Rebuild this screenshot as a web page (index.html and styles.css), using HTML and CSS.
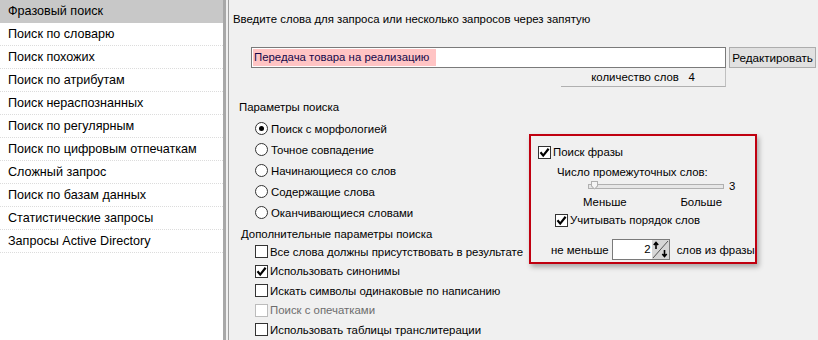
FILE: index.html
```html
<!DOCTYPE html>
<html lang="ru">
<head>
  <meta charset="UTF-8">
  <title>Фразовый поиск</title>
  <link rel="stylesheet" href="styles.css">
</head>
<body>
  <div class="sidebar">
    <div class="nav-item selected">Фразовый поиск</div>
    <div class="nav-item">Поиск по словарю</div>
    <div class="nav-item">Поиск похожих</div>
    <div class="nav-item">Поиск по атрибутам</div>
    <div class="nav-item">Поиск нераспознанных</div>
    <div class="nav-item">Поиск по регулярным</div>
    <div class="nav-item">Поиск по цифровым отпечаткам</div>
    <div class="nav-item">Сложный запрос</div>
    <div class="nav-item">Поиск по базам данных</div>
    <div class="nav-item">Статистические запросы</div>
    <div class="nav-item">Запросы Active Directory</div>
  </div>

  <div class="splitter"></div>

  <div class="main">
    <div class="prompt">Введите слова для запроса или несколько запросов через запятую</div>

    <div class="query">
      <div class="query-input"><span class="mark">Передача товара на реализацию</span></div>
      <button class="edit-btn">Редактировать</button>
    </div>
    <div class="word-count">количество слов&nbsp;&nbsp;&nbsp;4</div>

    <div class="lower">
      <div class="params">
        <div class="group-title">Параметры поиска</div>
        <div class="radio-list">
          <div class="option"><span class="radio checked"></span>Поиск с морфологией</div>
          <div class="option"><span class="radio"></span>Точное совпадение</div>
          <div class="option"><span class="radio"></span>Начинающиеся со слов</div>
          <div class="option"><span class="radio"></span>Содержащие слова</div>
          <div class="option"><span class="radio"></span>Оканчивающиеся словами</div>
        </div>

        <div class="group-title extra">Дополнительные параметры поиска</div>
        <div class="check-list">
          <div class="option"><span class="check"></span>Все слова должны присутствовать в результате</div>
          <div class="option"><span class="check checked"><svg width="11" height="11" viewBox="0 0 11 11"><path d="M1.5 5.3 L4.2 8.6 L9.6 1.8" fill="none" stroke="#000" stroke-width="2.2"/></svg></span>Использовать синонимы</div>
          <div class="option"><span class="check"></span>Искать символы одинаковые по написанию</div>
          <div class="option disabled"><span class="check"></span>Поиск с опечатками</div>
          <div class="option"><span class="check"></span>Использовать таблицы транслитерации</div>
        </div>
      </div>

      <div class="phrase-box">
        <div class="option phrase-check"><span class="check checked"><svg width="11" height="11" viewBox="0 0 11 11"><path d="M1.5 5.3 L4.2 8.6 L9.6 1.8" fill="none" stroke="#000" stroke-width="2.2"/></svg></span>Поиск фразы</div>
        <div class="gap-title">Число промежуточных слов:</div>
        <div class="slider-row">
          <div class="track"><span class="thumb"></span></div>
          <span class="slider-value">3</span>
        </div>
        <div class="slider-labels"><span>Меньше</span><span>Больше</span></div>
        <div class="option order-check"><span class="check checked"><svg width="11" height="11" viewBox="0 0 11 11"><path d="M1.5 5.3 L4.2 8.6 L9.6 1.8" fill="none" stroke="#000" stroke-width="2.2"/></svg></span>Учитывать порядок слов</div>
        <div class="min-row">
          <span>не меньше</span>
          <div class="spinner">
            <span class="spin-value">2</span>
            <span class="spin-btn"><svg width="17" height="19" viewBox="0 0 17 19"><line x1="1" y1="18" x2="16" y2="1" stroke="#555" stroke-width="1"/><path d="M4 9 V3 M1.8 5 L4 2.5 L6.2 5" fill="none" stroke="#000" stroke-width="1.6"/><path d="M12.5 10 V16 M10.3 14 L12.5 16.5 L14.7 14" fill="none" stroke="#000" stroke-width="1.6"/></svg></span>
          </div>
          <span>слов из фразы</span>
        </div>
      </div>
    </div>
  </div>
</body>
</html>
```

FILE: styles.css
```css
body {
  margin: 0;
  width: 818px;
  height: 340px;
  overflow: hidden;
  display: flex;
  background-color: #f0f0f0;
  font-family: "Liberation Sans", Arial, sans-serif;
  font-size: 11.4px;
  color: #000;
}

.sidebar {
  width: 223px;
  height: 340px;
  background-color: #fff;
  flex-shrink: 0;
}

.nav-item {
  height: 22px;
  line-height: 22px;
  padding-left: 8px;
  font-size: 12.6px;
  white-space: nowrap;
  border-bottom: 1px dotted #dcdcdc;
}

.nav-item.selected {
  background-color: #c8c8c8;
  border-bottom-color: #c8c8c8;
}

.splitter {
  width: 2px;
  flex-shrink: 0;
  border-left: 3px solid #a8a8a8;
  border-right: 1px solid #a0a0a0;
  background-color: #f0f0f0;
}

.main {
  flex: 1;
  white-space: nowrap;
}

.prompt {
  margin: 11px 0 0 4px;
  line-height: 16px;
}

.query {
  display: flex;
  gap: 3px;
  margin: 20px 0 0 22px;
}

.query-input {
  box-sizing: border-box;
  width: 475px;
  height: 21px;
  padding: 1px;
  border: 1px solid #7a7a7a;
  background-color: #fff;
}

.mark {
  display: inline-block;
  height: 17px;
  line-height: 17px;
  width: 182px;
  padding-left: 1px;
  background-color: #ffc4c4;
  color: #14084a;
}

.edit-btn {
  box-sizing: border-box;
  width: 87px;
  height: 21px;
  padding: 0;
  font-family: inherit;
  font-size: 11.7px;
  background-color: #e1e1e1;
  border: 1px solid #adadad;
  color: #000;
}

.word-count {
  box-sizing: border-box;
  width: 165px;
  height: 19px;
  margin-left: 332px;
  line-height: 18px;
  text-align: center;
  border-right: 1px solid #c0c0c0;
  border-bottom: 1px solid #b0b0b0;
}

.lower {
  display: flex;
  margin-top: 12px;
}

.params {
  box-sizing: border-box;
  width: 300px;
  flex-shrink: 0;
  padding-left: 10px;
}

.group-title {
  line-height: 16px;
}

.group-title.extra {
  margin-top: 3px;
  padding-left: 2px;
}

.radio-list {
  margin-top: 3px;
}

.radio-list .option {
  height: 21px;
}

.check-list .option {
  height: 19.5px;
}

.option {
  display: flex;
  align-items: center;
  padding-left: 16px;
}

.radio {
  box-sizing: border-box;
  flex-shrink: 0;
  width: 13px;
  height: 13px;
  margin-right: 3px;
  border: 1px solid #333;
  border-radius: 50%;
  background-color: #fff;
  display: flex;
  align-items: center;
  justify-content: center;
}

.radio.checked::after {
  content: "";
  width: 5px;
  height: 5px;
  border-radius: 50%;
  background-color: #000;
}

.check {
  box-sizing: border-box;
  flex-shrink: 0;
  width: 13px;
  height: 13px;
  margin-right: 2px;
  border: 1px solid #333;
  background-color: #fff;
  display: flex;
  align-items: center;
  justify-content: center;
}

.disabled {
  color: #6d6d6d;
}

.disabled .check {
  border-color: #bcbcbc;
}

.phrase-box {
  box-sizing: border-box;
  flex-shrink: 0;
  width: 228px;
  height: 130px;
  margin-top: 35px;
  padding-top: 6px;
  border: 2px solid #c00010;
  box-shadow: 2px 3px 5px rgba(0, 0, 0, 0.3);
}

.phrase-check {
  height: 20px;
  padding-left: 7px;
}

.gap-title {
  margin-top: 2px;
  padding-left: 26px;
  line-height: 16px;
}

.slider-row {
  display: flex;
  align-items: center;
  height: 12px;
  padding-left: 57px;
}

.track {
  position: relative;
  box-sizing: border-box;
  width: 136px;
  height: 5px;
  border: 1px solid #b0b0b0;
  background-color: #e7e7e7;
}

.thumb {
  position: absolute;
  left: 2px;
  top: -4px;
  width: 7px;
  height: 9px;
  background-color: #b0b0b0;
  clip-path: polygon(0 0, 100% 0, 100% 65%, 50% 100%, 0 65%);
}

.thumb::after {
  content: "";
  position: absolute;
  left: 1px;
  top: 1px;
  width: 5px;
  height: 7px;
  background-color: #f5f5f5;
  clip-path: polygon(0 0, 100% 0, 100% 60%, 50% 100%, 0 60%);
}

.slider-value {
  margin-left: 5px;
}

.slider-labels {
  display: flex;
  justify-content: space-between;
  width: 139px;
  margin: 2px 0 0 52px;
  line-height: 16px;
}

.order-check {
  height: 20px;
  padding-left: 24px;
}

.min-row {
  display: flex;
  align-items: center;
  margin-top: 9px;
  padding-left: 20px;
}

.spinner {
  box-sizing: border-box;
  flex-shrink: 0;
  display: flex;
  width: 58px;
  height: 21px;
  margin: 0 7px 0 3px;
  border: 1px solid #7a7a7a;
  background-color: #fff;
}

.spin-value {
  flex: 1;
  text-align: right;
  line-height: 19px;
  padding-right: 1px;
}

.spin-btn {
  width: 17px;
  height: 19px;
  background-color: #d6d6d6;
}

.spin-btn svg {
  display: block;
}
```
